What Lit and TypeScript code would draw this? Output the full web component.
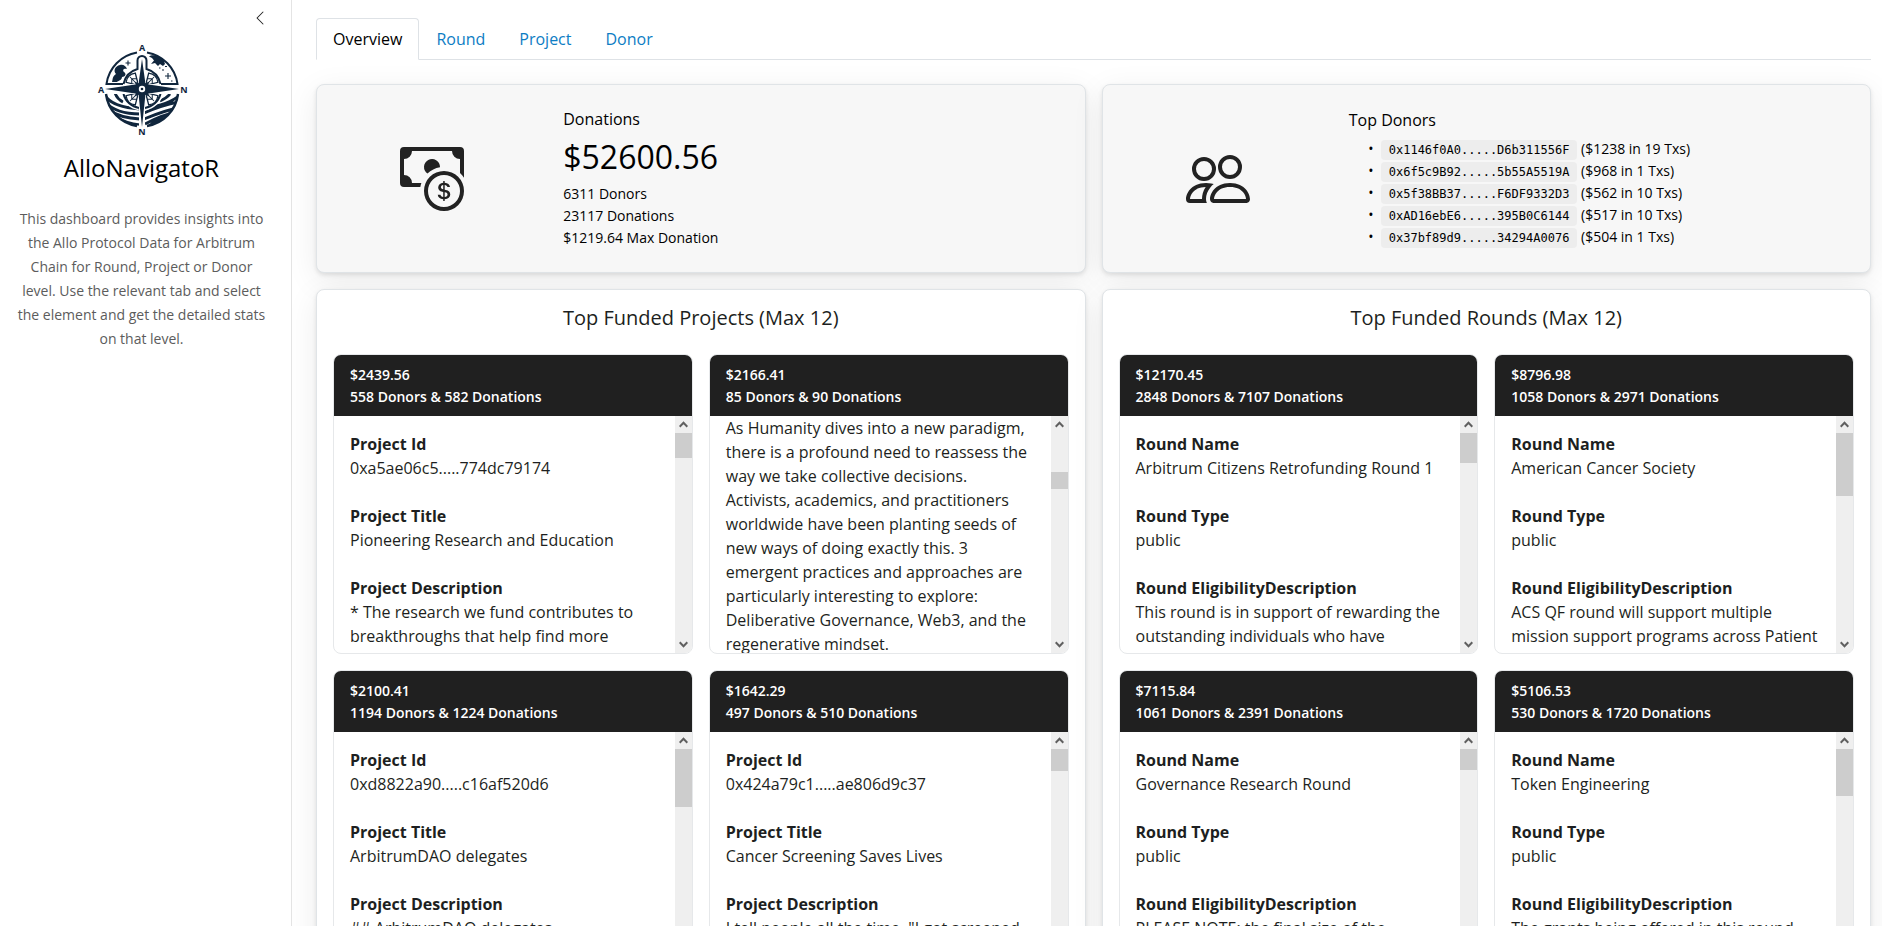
import { LitElement, html, css, svg, nothing } from "lit";
import { customElement, property, state } from "lit/decorators.js";
import { classMap } from "lit/directives/class-map.js";

interface Field {
  label: string;
  text: string;
}

interface Entry {
  amount: string;
  counts: string;
  fields: Field[];
  thumb: number;
  offset: number;
  anchored?: boolean;
}

const field = (label: string, text: string): Field => ({ label, text });

const PROJECTS: Entry[] = [
  {
    amount: "$2439.56",
    counts: "558 Donors & 582 Donations",
    thumb: 25,
    offset: 0,
    fields: [
      field("Project Id", "0xa5ae06c5.....774dc79174"),
      field("Project Title", "Pioneering Research and Education"),
      field("Project Description", "* The research we fund contributes to breakthroughs that help find more"),
    ],
  },
  {
    amount: "$2166.41",
    counts: "85 Donors & 90 Donations",
    thumb: 17,
    offset: 39,
    anchored: true,
    fields: [
      field(
        "",
        "As Humanity dives into a new paradigm, there is a profound need to reassess the way we take collective decisions. Activists, academics, and practitioners worldwide have been planting seeds of new ways of doing exactly this. 3 emergent practices and approaches are particularly interesting to explore: Deliberative Governance, Web3, and the regenerative mindset.",
      ),
    ],
  },
  {
    amount: "$2100.41",
    counts: "1194 Donors & 1224 Donations",
    thumb: 58,
    offset: 0,
    fields: [
      field("Project Id", "0xd8822a90.....c16af520d6"),
      field("Project Title", "ArbitrumDAO delegates"),
      field("Project Description", "## ArbitrumDAO delegates"),
    ],
  },
  {
    amount: "$1642.29",
    counts: "497 Donors & 510 Donations",
    thumb: 22,
    offset: 0,
    fields: [
      field("Project Id", "0x424a79c1.....ae806d9c37"),
      field("Project Title", "Cancer Screening Saves Lives"),
      field("Project Description", 'I tell people all the time, "I got screened'),
    ],
  },
];

const ROUNDS: Entry[] = [
  {
    amount: "$12170.45",
    counts: "2848 Donors & 7107 Donations",
    thumb: 30,
    offset: 0,
    fields: [
      field("Round Name", "Arbitrum Citizens Retrofunding Round 1"),
      field("Round Type", "public"),
      field("Round EligibilityDescription", "This round is in support of rewarding the outstanding individuals who have"),
    ],
  },
  {
    amount: "$8796.98",
    counts: "1058 Donors & 2971 Donations",
    thumb: 63,
    offset: 0,
    fields: [
      field("Round Name", "American Cancer Society"),
      field("Round Type", "public"),
      field("Round EligibilityDescription", "ACS QF round will support multiple mission support programs across Patient"),
    ],
  },
  {
    amount: "$7115.84",
    counts: "1061 Donors & 2391 Donations",
    thumb: 21,
    offset: 0,
    fields: [
      field("Round Name", "Governance Research Round"),
      field("Round Type", "public"),
      field("Round EligibilityDescription", "PLEASE NOTE: the final size of the"),
    ],
  },
  {
    amount: "$5106.53",
    counts: "530 Donors & 1720 Donations",
    thumb: 47,
    offset: 0,
    fields: [
      field("Round Name", "Token Engineering"),
      field("Round Type", "public"),
      field("Round EligibilityDescription", "The grants being offered in this round"),
    ],
  },
];

const DONORS = [
  ["0x1146f0A0.....D6b311556F", "($1238 in 19 Txs)"],
  ["0x6f5c9B92.....5b55A5519A", "($968 in 1 Txs)"],
  ["0x5f38BB37.....F6DF9332D3", "($562 in 10 Txs)"],
  ["0xAD16ebE6.....395B0C6144", "($517 in 10 Txs)"],
  ["0x37bf89d9.....34294A0076", "($504 in 1 Txs)"],
];

const TABS = ["Overview", "Round", "Project", "Donor"];

@customElement("compass-logo")
export class CompassLogo extends LitElement {
  static styles = css`
    :host {
      display: block;
    }
    .logo {
      display: block;
      width: 100px;
      height: 100px;
    }
    .letter {
      font: bold 9px "Open Sans", sans-serif;
      fill: #10263d;
      text-anchor: middle;
    }
  `;

  render() {
    const wedges = [45, 135, 225, 315].map(
      (a) => svg`<g transform="rotate(${a} 50 50)">
        <path d="M50 45 43.500 34Q50 29 56.500 34Z" fill="#fff" stroke="#10263d" stroke-width="1.300"/>
        <path d="M50 44V33M46.500 39 50 35.500 53.500 39" fill="none" stroke="#10263d" stroke-width="1"/>
      </g>`,
    );
    return html`<svg class="logo" viewBox="0 1 100 100" role="img" aria-label="AlloNavigatoR logo">
      <defs>
        <clipPath id="lower"><path d="M12 55H47V90H12ZM53 55H88V90H53Z" /></clipPath>
        <clipPath id="disc"><circle cx="50" cy="50" r="37" /></clipPath>
      </defs>
      <g fill="none" stroke="#10263d" stroke-width="2">
        <path d="M45 13.500A37 37 0 0 0 14.500 45H31M55 13.500A37 37 0 0 1 85.500 45H69" />
        <path d="M14 55A37 37 0 0 0 45 87M86 55A37 37 0 0 1 55 87" stroke-width="2.400" />
        <path d="M31.500 45A20 20 0 0 1 45.500 30V21.500A4.500 4.500 0 0 1 54.500 21.500V30A20 20 0 0 1 68.500 45" />
      </g>
      <path
        d="M20 43C21 40 20 38 24 35C21 32 23 27 28 26C31 25 34 27 35 30C32 29 30 31 32 33C35 35 33 38 30 38C30 41 26 42 25 43Z"
        fill="#10263d"
      />
      <path
        d="M57 17.500C60 15 67 16 72 22L73 25 71 27 68 25 66 27 63 24 59 25 62 21.500 60 19Z"
        fill="#10263d"
      />
      <path
        d="M36 21.500V26.500M33.500 24H38.500M76 34V40M73 37H79M70 31H72M73 27.500H75M79 42H80.500M67 29H68.500"
        stroke="#10263d"
        stroke-width="1.100"
      />
      <g clip-path="url(#lower)">
        <g clip-path="url(#disc)" fill="none" stroke="#10263d" stroke-width="2.800">
          <path d="M13 56Q19 68 48 70M13 63Q24 75 48 75M17 71Q28 79 48 80M22 78Q34 84 48 86M23 54Q25 60 31 63" />
          <path
            d="M88 56Q77 66 52 69M87 63Q70 66 52 74M86 69Q74 71 52 80M83 74Q72 75 53 85M80 79Q66 79 56 88M78 55Q75 59 68 62"
          />
        </g>
        <path d="M31 55A20 20 0 0 0 47 69M69 55A20 20 0 0 1 53 69" fill="none" stroke="#fff" stroke-width="4.500" />
        <circle cx="50" cy="50" r="18" fill="#fff" />
        <path d="M31.500 55A19 19 0 0 0 47 69M68.500 55A19 19 0 0 1 53 69" fill="none" stroke="#10263d" stroke-width="2" />
      </g>
      ${wedges}
      <path
        d="M50 20 53.500 45 87 50 53.500 55 50 88 46.500 55 13 50 46.500 45Z"
        fill="#10263d"
        stroke="#fff"
        stroke-width="1.500"
        paint-order="stroke"
      />
      <path d="M42.500 42.500 50 45.500 57.500 42.500 54.500 50 57.500 57.500 50 54.500 42.500 57.500 45.500 50Z" fill="#10263d" />
      <circle cx="50" cy="50" r="3.200" fill="#fff" />
      <circle cx="50" cy="50" r="1.300" fill="#10263d" />
      <text class="letter" x="50" y="12">A</text>
      <text class="letter" x="9" y="54">A</text>
      <text class="letter" x="92" y="54">N</text>
      <text class="letter" x="50" y="96">N</text>
    </svg>`;
  }
}

@customElement("entry-card")
export class EntryCard extends LitElement {
  @property({ attribute: false }) entry!: Entry;

  static styles = css`
    :host {
      display: flex;
      flex-direction: column;
      height: 300px;
      box-sizing: border-box;
      border: 1px solid #e6e8ea;
      border-radius: 8px;
      overflow: hidden;
      background: #fff;
    }
    .head {
      padding: 9px 16px 8px;
      background: #202020;
      color: #fff;
      font-size: 14px;
      line-height: 22px;
      font-weight: 600;
    }
    .head p {
      margin: 0;
    }
    .body {
      flex: 1;
      min-height: 0;
      display: flex;
    }
    .content {
      flex: 1;
      min-width: 0;
      overflow: hidden;
      padding: 16px;
    }
    .anchored {
      padding-top: 0;
    }
    .content dl,
    .content dd {
      margin: 0;
    }
    .content dd {
      margin-bottom: 24px;
    }
    .content dt {
      font-weight: 700;
    }
    .bar {
      width: 17px;
      flex: none;
      display: flex;
      flex-direction: column;
      background: #efefef;
    }
    .arrow {
      height: 17px;
      display: flex;
      align-items: center;
      justify-content: center;
    }
    .track {
      flex: 1;
      display: flow-root;
    }
    .thumb {
      background: #cdcdcd;
    }
  `;

  private arrow(d: string) {
    return html`<div class="arrow">
      <svg width="9" height="7" viewBox="0 0 9 7" fill="none" stroke="#606060" stroke-width="2"><path d=${d} /></svg>
    </div>`;
  }

  render() {
    const e = this.entry;
    return html`
      <header class="head">
        <p>${e.amount}</p>
        <p>${e.counts}</p>
      </header>
      <div class="body">
        <div class=${classMap({ content: true, anchored: !!e.anchored })}>
          <dl>
            ${e.fields.map(
              (f) => html`${f.label ? html`<dt>${f.label}</dt>` : nothing}
                <dd>${f.text}</dd>`,
            )}
          </dl>
        </div>
        <div class="bar" aria-hidden="true">
          ${this.arrow("M0.700 5.700L4.500 1.700L8.300 5.700")}
          <div class="track">
            <div class="thumb" style="height:${e.thumb}px;margin-top:${e.offset}px"></div>
          </div>
          ${this.arrow("M0.700 1.300L4.500 5.300L8.300 1.300")}
        </div>
      </div>
    `;
  }
}

@customElement("app-root")
export class AppRoot extends LitElement {
  @state() private tab = "Overview";

  static styles = css`
    :host {
      display: flex;
      height: 100vh;
      font-family: "Open Sans", sans-serif;
      font-size: 16px;
      line-height: 24px;
      color: #1d1f21;
      background: #fff;
    }
    .side {
      width: 292px;
      flex: none;
      box-sizing: border-box;
      border-right: 1px solid #e4e4e4;
      padding: 8px 16px;
      text-align: center;
    }
    .collapse {
      display: block;
      margin-left: auto;
      margin-right: 5px;
      padding: 2px;
      border: 0;
      background: none;
      line-height: 0;
    }
    .brand {
      display: flex;
      flex-direction: column;
      align-items: center;
      padding: 12px 0 0 0;
      margin-right: 8px;
    }
    .brand h1 {
      margin: 13px 0 24px;
      font-size: 24px;
      line-height: 30px;
      font-weight: 400;
      color: #000;
    }
    .brand p {
      margin: 0;
      font-size: 14px;
      color: #5c5c5c;
    }
    .main {
      flex: 1;
      min-width: 0;
      overflow-y: auto;
      scrollbar-width: none;
      padding: 18px 11px 24px 24px;
    }
    .tabs {
      display: flex;
      border-bottom: 1px solid #dee2e6;
      margin-bottom: 24px;
    }
    .tab {
      font: inherit;
      color: #0d7dc4;
      background: none;
      border: 1px solid transparent;
      border-radius: 4px 4px 0 0;
      padding: 8px 16px;
      margin-bottom: -1px;
    }
    .active {
      color: #000;
      background: #fff;
      border-color: #dee2e6 #dee2e6 #fff;
    }
    .grid {
      display: grid;
      grid-template-columns: 1fr 1fr;
      gap: 16px;
    }
    .card {
      border: 1px solid #e0e4e7;
      border-radius: 8px;
      background: #fff;
      box-shadow: 0 2px 4px rgba(0, 0, 0, 0.1), 0 8px 32px rgba(0, 0, 0, 0.08);
    }
    .stat {
      display: grid;
      grid-template-columns: 3fr 7fr;
      align-items: center;
      min-height: 187px;
      background: #f7f7f7;
      color: #000;
    }
    .icon {
      justify-self: center;
      color: #222;
    }
    .icon svg {
      display: block;
    }
    .info {
      padding: 0 16px;
    }
    .info h2 {
      margin: 0 0 8px;
      font-size: 16px;
      line-height: 20px;
      font-weight: 400;
    }
    .value {
      margin: 0 0 6px;
      font-size: 32px;
      line-height: 40px;
    }
    .lines {
      margin: 0;
      padding: 0;
      list-style: none;
      font-size: 14px;
      line-height: 22px;
      font-weight: 500;
    }
    .bullets {
      list-style-type: "•\\00a0\\00a0";
      padding-left: 32px;
    }
    .bullets code {
      font-family: "DejaVu Sans Mono", monospace;
      font-size: 12px;
      line-height: 16px;
      padding: 3px 8px;
      border-radius: 4px;
      background: #ededed;
      font-weight: 400;
    }
    .panel {
      padding: 16px;
    }
    .panel h2 {
      margin: 0 0 24px;
      font-size: 20px;
      line-height: 24px;
      font-weight: 400;
      text-align: center;
    }
  `;

  private panel(title: string, entries: Entry[]) {
    return html`<section class="card panel">
      <h2>${title}</h2>
      <div class="grid">${entries.map((e) => html`<entry-card .entry=${e}></entry-card>`)}</div>
    </section>`;
  }

  render() {
    return html`
      <aside class="side">
        <button class="collapse" aria-label="Toggle sidebar">
          <svg width="16" height="16" viewBox="0 0 16 16" fill="#222">
            <path
              fill-rule="evenodd"
              d="M11.354 1.646a.5.5 0 0 1 0 .708L5.707 8l5.647 5.646a.5.5 0 0 1-.708.708l-6-6a.5.5 0 0 1 0-.708l6-6a.5.5 0 0 1 .708 0"
            />
          </svg>
        </button>
        <div class="brand">
          <compass-logo></compass-logo>
          <h1>AlloNavigatoR</h1>
          <p>
            This dashboard provides insights into the Allo Protocol Data for Arbitrum Chain for Round, Project or Donor
            level. Use the relevant tab and select the element and get the detailed stats on that level.
          </p>
        </div>
      </aside>
      <main class="main">
        <nav class="tabs" role="tablist">
          ${TABS.map(
            (t) =>
              html`<button
                role="tab"
                aria-selected=${t === this.tab}
                class=${classMap({ tab: true, active: t === this.tab })}
                @click=${() => (this.tab = t)}
              >
                ${t}
              </button>`,
          )}
        </nav>
        <div class="grid">
          <section class="card stat">
            <div class="icon">
              <svg width="64" height="64" viewBox="0 0 16 16" fill="currentColor">
                <path
                  fill-rule="evenodd"
                  d="M11 15a4 4 0 1 0 0-8 4 4 0 0 0 0 8m5-4a5 5 0 1 1-10 0 5 5 0 0 1 10 0"
                />
                <path
                  d="M9.438 11.944c.047.596.518 1.06 1.363 1.116v.44h.375v-.443c.875-.061 1.386-.529 1.386-1.207 0-.618-.39-.936-1.09-1.1l-.296-.07v-1.2c.376.043.614.248.671.532h.658c-.047-.575-.54-1.024-1.329-1.073V8.5h-.375v.45c-.747.073-1.255.522-1.255 1.158 0 .562.378.92 1.007 1.066l.248.061v1.272c-.384-.058-.639-.27-.696-.563h-.668zm1.36-1.354c-.369-.085-.569-.26-.569-.522 0-.294.216-.514.572-.578v1.1zm.432.746c.449.104.655.272.655.569 0 .339-.257.571-.709.614v-1.195z"
                />
                <path
                  d="M1 0a1 1 0 0 0-1 1v8a1 1 0 0 0 1 1h4.083q.088-.517.258-1H3a2 2 0 0 0-2-2V3a2 2 0 0 0 2-2h10a2 2 0 0 0 2 2v3.528c.38.34.717.728 1 1.154V1a1 1 0 0 0-1-1z"
                />
                <path d="M9.998 5.083 10 5a2 2 0 1 0-3.132 1.65 6 6 0 0 1 3.13-1.567" />
              </svg>
            </div>
            <div class="info">
              <h2>Donations</h2>
              <p class="value">$52600.56</p>
              <ul class="lines">
                <li>6311 Donors</li>
                <li>23117 Donations</li>
                <li>$1219.64 Max Donation</li>
              </ul>
            </div>
          </section>
          <section class="card stat">
            <div class="icon">
              <svg width="64" height="64" viewBox="0 0 16 16" fill="currentColor">
                <path
                  d="M15 14s1 0 1-1-1-4-5-4-5 3-5 4 1 1 1 1zm-7.978-1L7 12.996c.001-.264.167-1.03.76-1.72C8.312 10.629 9.282 10 11 10c1.717 0 2.687.63 3.24 1.276.593.69.758 1.457.76 1.72l-.008.002-.014.002zM11 7a2 2 0 1 0 0-4 2 2 0 0 0 0 4m3-2a3 3 0 1 1-6 0 3 3 0 0 1 6 0M6.936 9.28a6 6 0 0 0-1.23-.247A7 7 0 0 0 5 9c-4 0-5 3-5 4q0 1 1 1h4.216A2.24 2.24 0 0 1 5 13c0-1.01.377-2.042 1.09-2.904.243-.294.526-.569.846-.816M4.92 10A5.500 5.500 0 0 0 4 13H1c0-.26.164-1.03.76-1.724.545-.636 1.492-1.256 3.16-1.275ZM1.500 5.500a3 3 0 1 1 6 0 3 3 0 0 1-6 0m3-2a2 2 0 1 0 0 4 2 2 0 0 0 0-4"
                />
              </svg>
            </div>
            <div class="info">
              <h2>Top Donors</h2>
              <ul class="lines bullets">
                ${DONORS.map(([id, note]) => html`<li><code>${id}</code> ${note}</li>`)}
              </ul>
            </div>
          </section>
          ${this.panel("Top Funded Projects (Max 12)", PROJECTS)} ${this.panel("Top Funded Rounds (Max 12)", ROUNDS)}
        </div>
      </main>
    `;
  }
}
